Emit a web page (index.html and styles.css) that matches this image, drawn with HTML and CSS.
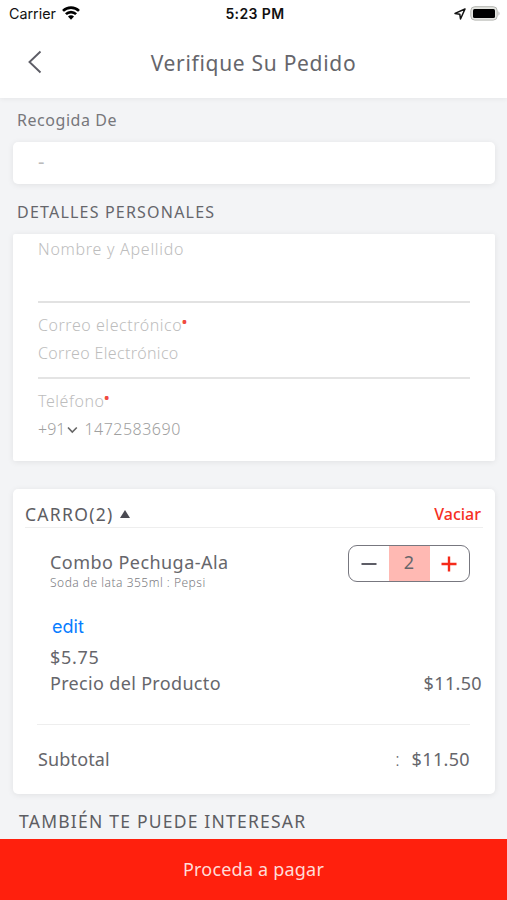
FILE: index.html
```html
<!DOCTYPE html>
<html lang="es">
<head>
<meta charset="utf-8">
<title>Verifique Su Pedido</title>
<link rel="stylesheet" href="styles.css">
</head>
<body>
<div class="screen">
  <header class="header">
    <div class="status">
      <div class="status-left"><span class="carrier">Carrier</span>
        <svg class="wifi" width="18" height="14" viewBox="0 0 18 14" fill="none" stroke="#000" stroke-width="2.6"><path d="M1 4.9a11.4 11.4 0 0 1 16 0M3.9 8.2a7.2 7.2 0 0 1 10.2 0"/><path d="M6 10.6a4.2 4.2 0 0 1 6 0L9 13.8z" fill="#000" stroke="none"/></svg>
      </div>
      <span class="time">5:23 PM</span>
      <div class="status-right">
        <svg width="12" height="12" viewBox="0 0 12 12" fill="none" stroke="#111" stroke-width="1.5" stroke-linejoin="round"><path d="M11 1 1 5.4l4.8.8.7 4.8z"/></svg>
        <svg width="31" height="15" viewBox="0 0 31 15"><rect x=".8" y=".7" width="26.4" height="13.4" rx="4" fill="#e4e5e1" stroke="#b4b5b1"/><rect x="3" y="3" width="22" height="9" rx="1.5"/><path d="M28.5 5.2q2 2.2 0 4.6z" fill="#aaa"/></svg>
      </div>
    </div>
    <div class="nav">
      <svg class="back" width="16" height="24" viewBox="0 0 16 24" fill="none" stroke="#5d5d66" stroke-width="1.9"><path d="M13.5 1.5 2.5 12l11 10.5"/></svg>
      <h1 class="title">Verifique Su Pedido</h1>
    </div>
  </header>
  <main class="content">
    <h2 class="label pickup-label">Recogida De</h2>
    <section class="card pickup">-</section>
    <h2 class="label details-label">DETALLES PERSONALES</h2>
    <section class="card details">
      <div class="field name"><span class="ph-name">Nombre y Apellido</span></div>
      <div class="field email"><span class="ph-email">Correo electrónico<b class="req">•</b></span><span class="ph-email2">Correo Electrónico</span></div>
      <div class="field phone"><span class="ph-tel">Teléfono<b class="req">•</b></span>
        <div class="phone-row"><span class="code">+91</span><svg width="11" height="8" viewBox="0 0 11 8" fill="none" stroke="#666" stroke-width="1.6"><path d="M1 1.5 5.3 6 9.8 1.5"/></svg><span class="number">1472583690</span></div>
      </div>
    </section>
    <section class="card cart">
      <div class="cart-head"><span class="cart-title">CARRO(2)</span><i class="caret"></i><span class="clear">Vaciar</span></div>
      <div class="item">
        <div class="item-top">
          <div class="item-text"><div class="item-name"><span>Combo Pechuga-Ala</span></div><div class="item-sub"><span>Soda de lata 355ml : Pepsi</span></div></div>
          <div class="stepper">
            <span class="step"><svg width="16" height="16" viewBox="0 0 16 16" stroke="#5d5d66" stroke-width="2"><path d="M.5 8h15"/></svg></span>
            <span class="qty">2</span>
            <span class="step"><svg width="16" height="16" viewBox="0 0 16 16" stroke="#f52a1a" stroke-width="2.4"><path d="M.5 8h15M8 .5v15"/></svg></span>
          </div>
        </div>
        <div class="edit"><span>edit</span></div>
        <div class="unit"><span>$5.75</span></div>
        <div class="price-row"><span class="price-label">Precio del Producto</span><span class="amount">$11.50</span></div>
      </div>
      <div class="subtotal"><span class="sub-label">Subtotal</span><span class="colon">:</span><span class="amount">$11.50</span></div>
    </section>
    <h2 class="also"><span>TAMBIÉN TE PUEDE INTERESAR</span></h2>
  </main>
  <footer class="pay"><span>Proceda a pagar</span></footer>
</div>
</body>
</html>
```
FILE: styles.css
```css
* { box-sizing: border-box; }
body { margin: 0; font-family: "Noto Sans", sans-serif; color: #66666b; background: #f3f4f6; }
h1, h2 { margin: 0; font-weight: 400; }
span { white-space: nowrap; }
svg { display: block; flex: none; }
.screen { width: 507px; height: 900px; display: flex; flex-direction: column; overflow: hidden; }
.header { height: 98px; background: #fff; box-shadow: 0 1px 5px rgba(0,0,0,.06); }
.status { height: 27px; padding: 0 6px 0 9px; display: grid; grid-template-columns: 1fr auto 1fr; align-items: center; font-family: Inter, sans-serif; color: #111; }
.status-left { display: flex; align-items: center; gap: 6px; font-size: 14.3px; }
.wifi { margin-bottom: 1px; }
.time { font-size: 14px; font-weight: 600; letter-spacing: .4px; }
.status-right { display: flex; justify-content: flex-end; align-items: center; gap: 4px; }
.nav { height: 71px; display: grid; grid-template-columns: 27px 1fr 27px; align-items: center; }
.back { justify-self: end; margin-bottom: 2px; margin-right: -16px; }
.title { text-align: center; font-size: 21px; letter-spacing: .7px; }
.content { height: 741px; }
.label { padding-left: 17px; font-size: 16px; }
.pickup-label { height: 44px; line-height: 44px; letter-spacing: .55px; color: #77777b; }
.card { margin: 0 12px 0 13px; background: #fff; border-radius: 5px; box-shadow: 0 1px 6px rgba(0,0,0,.08); }
.pickup { height: 42px; padding-left: 25px; font-size: 20px; line-height: 39px; color: #bbb; }
.details-label { height: 50px; line-height: 57px; letter-spacing: 1.2px; }
.details { height: 227px; padding: 0 25px; border-radius: 2px; font-size: 16px; line-height: 28px; color: #bdbdbd; font-weight: 300; }
.field { display: flex; flex-direction: column; align-items: flex-start; }
.name { height: 69px; padding-top: 1px; border-bottom: 1.5px solid #e2e2e2; }
.name, .email { border-bottom-width: 2px; }
.email { height: 76px; padding-top: 8px; border-bottom: 2px solid #e4e4e4; }
.phone { padding-top: 8px; }
.ph-name { letter-spacing: .72px; }
.ph-email, .ph-tel { letter-spacing: .55px; }
.ph-email2 { letter-spacing: .35px; }
.req { color: #f04a40; font-size: 17px; line-height: 1; vertical-align: 3px; margin-left: -1px; letter-spacing: 0; font-weight: 400; }
.ph-email, .ph-tel { height: 28px; }
.phone-row { display: flex; align-items: center; color: #a0a0a0; }
.phone-row svg { margin: 2px 6px 0 2px; }
.number { letter-spacing: .5px; }
.cart { height: 305px; margin-top: 28px; font-size: 18px; }
.cart-head { height: 39px; margin: 0 12px; padding-top: 12px; display: flex; align-items: center; border-bottom: 1px solid #eee; }
.cart-title { font-size: 17.5px; letter-spacing: 1.3px; color: #5d5d62; }
.caret { margin-left: 6px; border: 5.5px solid transparent; border-top: 0; border-bottom: 8px solid #4a4a52; }
.clear { margin-left: auto; margin-right: 2px; font-size: 16px; color: #f5301f; font-weight: 500; }
.item { height: 197px; margin-left: 24px; margin-right: 25px; padding-left: 13px; border-bottom: 1px solid #eee; }
.item-top { display: flex; justify-content: space-between; padding-top: 17px; height: 84px; }
.item-name { height: 37px; line-height: 35px; letter-spacing: .45px; }
.item-sub { margin-top: -6px; font-size: 12px; line-height: 14px; letter-spacing: .5px; color: #7c7c82; font-weight: 300; }
.stepper { width: 122px; height: 37px; display: flex; border: 1.5px solid #77777f; border-radius: 9px; overflow: hidden; }
.step, .qty { flex: 1; display: flex; align-items: center; justify-content: center; }
.qty { background: #ffb9b3; font-size: 18px; line-height: 33px; flex: 0 0 41px; padding-bottom: 2px; }
.edit { height: 30px; line-height: 29px; padding-left: 2px; font-family: Inter, sans-serif; color: #087dff; }
.unit { height: 27px; line-height: 31px; letter-spacing: .7px; }
.price-row { height: 27px; line-height: 29px; display: flex; justify-content: space-between; margin-right: -12px; }
.price-label { letter-spacing: .33px; }
.amount { letter-spacing: .35px; }
.subtotal { height: 69px; padding: 0 25px; line-height: 69px; display: flex; }
.sub-label { letter-spacing: .15px; }
.colon { margin-left: auto; margin-right: 12px; font-weight: 300; }
.also { padding-left: 19px; font-size: 17.5px; line-height: 55px; height: 45px; letter-spacing: 1.22px; color: #5d5d62; }
.pay { height: 61px; background: #ff200d; color: #ffdcd8; text-align: center; font-size: 18px; line-height: 60px; letter-spacing: .2px; }
```
